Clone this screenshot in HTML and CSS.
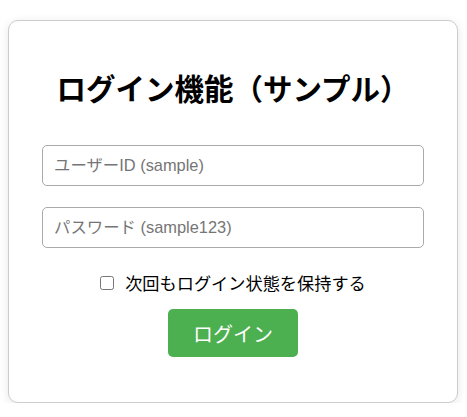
FILE: index.html
```html
<!DOCTYPE html>
<html lang="ja">
<head>
<meta charset="utf-8">
<title>ログイン機能（サンプル）</title>
<link rel="stylesheet" href="styles.css">
</head>
<body>
<div class="card">
  <h1 class="title">ログイン機能（サンプル）</h1>
  <form class="form">
    <input class="field field-user" type="text" placeholder="ユーザーID (sample)">
    <input class="field" type="password" placeholder="パスワード (sample123)">
    <label class="remember"><input class="check" type="checkbox"><span>次回もログイン状態を保持する</span></label>
    <button class="btn" type="button">ログイン</button>
  </form>
</div>
</body>
</html>
```

FILE: styles.css
```css
html, body {
  margin: 0;
  padding: 0;
  background: #ffffff;
}

body {
  font-family: "Liberation Sans", "Noto Sans CJK JP", sans-serif;
  color: #000;
}

.card {
  box-sizing: border-box;
  margin: 20px 9px 0 8px;
  width: 450px;
  height: 383px;
  padding: 46px 0 0;
  border: 1px solid #cccccc;
  border-radius: 10px;
  background: #fff;
  box-shadow: 0 2px 10px rgba(0, 0, 0, 0.1);
}

.title {
  margin: 0 0 37px;
  font-family: "Noto Sans CJK JP", sans-serif;
  font-size: 29.5px;
  font-weight: bold;
  line-height: 41px;
  text-align: center;
}

.form {
  display: flex;
  flex-direction: column;
  align-items: center;
}

.field {
  box-sizing: border-box;
  width: 382px;
  height: 41px;
  margin: 0;
  padding: 0 11px;
  border: 1px solid #aaaaaa;
  border-radius: 5px;
  font-family: "Liberation Sans", "Noto Sans CJK JP", sans-serif;
  font-size: 16.4px;
  color: #000;
  background: #fff;
  outline: none;
}

.field::placeholder {
  color: #757575;
}

.field-user {
  margin-bottom: 21px;
}

.remember {
  display: flex;
  align-items: center;
  height: 24px;
  margin-top: 23px;
  font-family: "Noto Sans CJK JP", sans-serif;
  font-size: 17.2px;
  line-height: 24px;
}

.check {
  width: 14px;
  height: 14px;
  margin: 0 11px 0 0;
}

.btn {
  box-sizing: border-box;
  width: 130px;
  height: 48px;
  margin-top: 14px;
  padding: 0;
  border: none;
  border-radius: 5px;
  background: #4caf50;
  color: #fff;
  font-family: "Noto Sans CJK JP", sans-serif;
  font-size: 20px;
  cursor: pointer;
}
```
